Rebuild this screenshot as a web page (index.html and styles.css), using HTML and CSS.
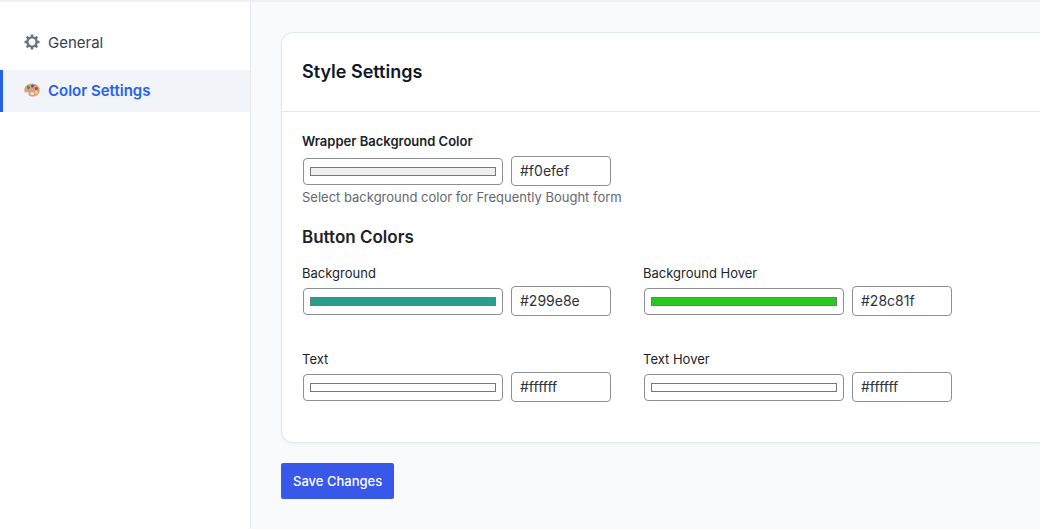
FILE: index.html
```html
<!DOCTYPE html>
<html lang="en">
<head>
<meta charset="UTF-8">
<meta name="viewport" content="width=device-width, initial-scale=1.0">
<title>Style Settings</title>
<link rel="stylesheet" href="styles.css">
</head>
<body>

<div class="layout">
  <nav class="sidebar">
    <a href="#general" class="nav-item">
      <svg class="nav-icon" viewBox="0 0 16 16" aria-hidden="true">
        <path stroke="#68747f" stroke-width="2.6" d="M8 .5v3.500M8 12v3.500M.5 8H4M12 8h3.500M2.700 2.700l2.400 2.400M10.900 10.900l2.400 2.400M2.700 13.300l2.400-2.400M10.900 5.100l2.400-2.400"/>
        <circle cx="8" cy="8" r="4.6" fill="none" stroke="#68747f" stroke-width="2.4"/>
      </svg>
      General
    </a>
    <a href="#color-settings" class="nav-item active">
      <svg class="nav-icon" viewBox="0 0 16 16" aria-hidden="true">
        <path fill="#db9f84" fill-rule="evenodd" d="M8.200 1.500C3.800 1.500.3 4.300.3 8c0 1.600.4 2.500 1.200 2.500 1 0 1.300-.7 2.200-.5 1.200.4.100 2.100 1.200 3.300.8.900 2.200 1.300 3.800 1.300 4 0 7-2.600 7-6.300 0-4-3.300-6.800-7.500-6.800zM7.600 10.300c1.200-.1 2.200.6 2.200 1.400 0 .7-.6 1.100-1.400 1.100-1.100 0-2-.6-2-1.300 0-.6.500-1.100 1.200-1.200z"/>
        <circle cx="4.300" cy="5.600" r="1.500" fill="#43923f"/>
        <circle cx="8.500" cy="4" r="1.500" fill="#286da8"/>
        <circle cx="12.300" cy="6.600" r="1.500" fill="#d92f3c"/>
        <circle cx="12.200" cy="10.400" r="1.600" fill="#ffd04c"/>
      </svg>
      Color Settings
    </a>
  </nav>

  <main class="content">
    <form id="styleForm">
      <section class="card">
        <header class="card-header">
          <h2>Style Settings</h2>
        </header>
        <div class="card-body">
          <div class="field">
            <label for="wrapperBg" class="field-title">Wrapper Background Color</label>
            <div class="controls">
              <input type="color" id="wrapperBg" value="#f0efef">
              <input type="text" value="#f0efef" aria-label="Wrapper Background Color hex">
            </div>
            <p class="description">Select background color for Frequently Bought form</p>
          </div>

          <h3>Button Colors</h3>
          <div class="color-grid">
            <div class="field">
              <label for="btnBg">Background</label>
              <div class="controls">
                <input type="color" id="btnBg" value="#299e8e">
                <input type="text" value="#299e8e" aria-label="Background hex">
              </div>
            </div>
            <div class="field">
              <label for="btnBgHover">Background Hover</label>
              <div class="controls">
                <input type="color" id="btnBgHover" value="#28c81f">
                <input type="text" value="#28c81f" aria-label="Background Hover hex">
              </div>
            </div>
            <div class="field">
              <label for="btnText">Text</label>
              <div class="controls">
                <input type="color" id="btnText" value="#ffffff">
                <input type="text" value="#ffffff" aria-label="Text hex">
              </div>
            </div>
            <div class="field">
              <label for="btnTextHover">Text Hover</label>
              <div class="controls">
                <input type="color" id="btnTextHover" value="#ffffff">
                <input type="text" value="#ffffff" aria-label="Text Hover hex">
              </div>
            </div>
          </div>
        </div>
      </section>
      <button type="submit">Save Changes</button>
    </form>
  </main>
</div>

<script>
// Keep each color picker and its hex text box in sync
document.querySelectorAll(".controls").forEach(function(row) {
  var picker = row.querySelector('input[type="color"]');
  var hex = row.querySelector('input[type="text"]');

  picker.addEventListener("input", function() {
    hex.value = picker.value;
  });

  hex.addEventListener("change", function() {
    if (/^#[0-9a-f]{6}$/i.test(hex.value)) {
      picker.value = hex.value;
    }
  });
});

document.getElementById("styleForm").addEventListener("submit", function(event) {
  event.preventDefault();
});
</script>

</body>
</html>
```
FILE: styles.css
```css
* {
  box-sizing: border-box;
}

body {
  margin: 0;
  font-family: Inter, sans-serif;
  font-size: 13px;
  color: #1d2327;
  background-color: #f8fafc;
}

.layout {
  display: flex;
  min-height: 100vh;
  border-top: 2px solid #f0f0f1;
}

/* Sidebar */
.sidebar {
  display: flex;
  flex-direction: column;
  flex-shrink: 0;
  gap: 6px;
  width: 251px;
  padding-top: 20px;
  background-color: #fff;
  border-right: 1px solid #e5e7eb;
}

.nav-item {
  display: flex;
  align-items: center;
  gap: 8px;
  height: 42px;
  padding: 0 0 2px 21px;
  border-left: 3px solid transparent;
  color: #334155;
  font-size: 15px;
  text-decoration: none;
}

.nav-item.active {
  background-color: #f1f4f9;
  border-left-color: #2563eb;
  color: #2563eb;
  font-weight: 600;
}

.nav-icon {
  width: 16px;
  height: 16px;
}

/* Settings card */
.content {
  flex: 1;
  padding: 30px 0 30px 30px;
}

.card {
  margin-bottom: 20px;
  background-color: #fff;
  border: 1px solid #e2e8f0;
  border-right: none;
  border-radius: 12px 0 0 12px;
  box-shadow: 0 1px 3px rgba(0, 0, 0, 0.05);
}

.card-header {
  padding: 27px 20px;
  border-bottom: 1px solid #e5e7eb;
}

h2,
h3 {
  margin: 0;
  line-height: 24px;
  font-weight: 600;
}

h2 {
  font-size: 18px;
  color: #0f172a;
}

h3 {
  margin: 18px 0 15px;
  font-size: 17px;
}

.card-body {
  padding: 20px 20px 40px;
}

label {
  display: block;
  margin-bottom: 4px;
  line-height: 18px;
}

.field-title {
  margin-bottom: 6px;
  font-weight: 600;
}

.controls {
  display: flex;
  align-items: center;
  gap: 8px;
}

input {
  border: 1px solid #8c8f94;
  border-radius: 4px;
  background-color: #fff;
}

input[type="color"] {
  width: 200px;
  height: 27px;
  margin: 1px 0 0 1px;
  padding: 4px;
}

input[type="text"] {
  width: 100px;
  height: 30px;
  padding: 0 8px 2px;
  color: #2c3338;
  font-family: inherit;
  font-size: 14px;
}

.description {
  margin: 1px 0 0;
  line-height: 20px;
  color: #646970;
}

.color-grid {
  display: grid;
  grid-template-columns: repeat(auto-fill, 309px);
  gap: 34px 32px;
}

button {
  height: 36px;
  padding: 0 12px;
  border: none;
  border-radius: 2px;
  background-color: #3858e9;
  color: #fff;
  font-family: inherit;
  font-size: 13px;
  font-weight: 500;
  cursor: pointer;
}

button:hover {
  background-color: #2145e6;
}
```
